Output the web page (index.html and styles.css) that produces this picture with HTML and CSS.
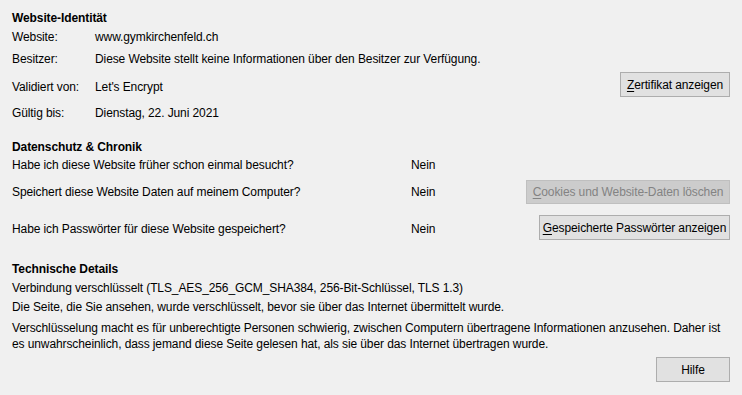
FILE: index.html
```
<html lang="de">
<head>
    <meta charset="UTF-8" />
    <title>Seiteninformationen</title>
    <link rel="stylesheet" href="styles.css">
</head>
<body>
    <div class="section identity">
      <h2>Website-Identität</h2>
      <div class="row">
        <span class="label">Website:</span>
        <span class="value">www.gymkirchenfeld.ch</span>
      </div>
      <div class="row owner">
        <span class="label">Besitzer:</span>
        <span class="value">Diese Website stellt keine Informationen über den Besitzer zur Verfügung.</span>
      </div>
      <div class="row verifier">
        <span class="label">Validiert von:</span>
        <span class="value">Let's Encrypt</span>
        <button class="btn btn-cert"><u>Z</u>ertifikat anzeigen</button>
      </div>
      <div class="row expiry">
        <span class="label">Gültig bis:</span>
        <span class="value">Dienstag, 22. Juni 2021</span>
      </div>
    </div>

    <div class="section privacy">
      <h2>Datenschutz &amp; Chronik</h2>
      <div class="qrow">
        <span class="question">Habe ich diese Website früher schon einmal besucht?</span>
        <span class="answer">Nein</span>
      </div>
      <div class="qrow q-cookies">
        <span class="question">Speichert diese Website Daten auf meinem Computer?</span>
        <span class="answer">Nein</span>
        <button class="btn btn-cookies" disabled><u>C</u>ookies und Website-Daten löschen</button>
      </div>
      <div class="qrow q-passwords">
        <span class="question">Habe ich Passwörter für diese Website gespeichert?</span>
        <span class="answer">Nein</span>
        <button class="btn btn-passwords"><u>G</u>espeicherte Passwörter anzeigen</button>
      </div>
    </div>

    <div class="section tech">
      <h2>Technische Details</h2>
      <p class="line1">Verbindung verschlüsselt (TLS_AES_256_GCM_SHA384, 256-Bit-Schlüssel, TLS 1.3)</p>
      <p class="line2">Die Seite, die Sie ansehen, wurde verschlüsselt, bevor sie über das Internet übermittelt wurde.</p>
      <p class="line3">Verschlüsselung macht es für unberechtigte Personen schwierig, zwischen Computern übertragene Informationen anzusehen. Daher ist es unwahrscheinlich, dass jemand diese Seite gelesen hat, als sie über das Internet übertragen wurde.</p>
    </div>

    <div class="footer">
      <button class="btn btn-help">Hilfe</button>
    </div>
</body>
</html>
```
FILE: styles.css
```
body {
    margin: 0;
    padding: 10px 12px 0 12px;
    background-color: #f0f0f0;
    color: #000;
    font-family: "Liberation Sans", Arial, sans-serif;
    font-size: 12px;
    line-height: 16px;
    letter-spacing: -0.1px;
}

h2 {
    margin: 0;
    font-size: 12px;
    font-weight: bold;
}

p {
    margin: 0;
}

.row {
    display: flex;
    align-items: flex-start;
}

.label {
    width: 83px;
    flex-shrink: 0;
}

.identity .row {
    margin-top: 3px;
}

.identity .owner {
    margin-top: 6px;
}

.identity .verifier {
    margin-top: 5px;
    height: 25px;
}

.verifier .label,
.verifier .value {
    padding-top: 7px;
}

.identity .expiry {
    margin-top: 8px;
}

.btn {
    font-family: inherit;
    font-size: 12px;
    line-height: 16px;
    letter-spacing: -0.1px;
    white-space: nowrap;
    color: #000;
    background-color: #e1e1e1;
    border: 1px solid #adadad;
    border-radius: 0;
    height: 25px;
    padding: 0;
    margin: 0;
}

.btn u {
    text-underline-offset: 2px;
}

.btn-cert {
    margin-left: auto;
    width: 110px;
}

.privacy {
    margin-top: 18px;
}

.qrow {
    display: flex;
    align-items: center;
    margin-top: 2px;
}

.question {
    width: 399px;
    flex-shrink: 0;
}

.q-cookies {
    margin-top: 7px;
}

.q-passwords {
    margin-top: 11px;
}

.q-passwords .question,
.q-passwords .answer {
    padding-top: 3px;
}

.btn-cookies {
    margin-left: auto;
    width: 204px;
    height: 24px;
    background-color: #cccccc;
    border-color: #bfbfbf;
    color: #838383;
}

.btn-passwords {
    margin-left: auto;
    width: 191px;
}

.tech {
    margin-top: 21px;
}

.tech .line1 {
    margin-top: 3px;
}

.tech .line2 {
    margin-top: 3px;
}

.tech .line3 {
    margin-top: 5px;
}

.footer {
    display: flex;
    justify-content: flex-end;
    margin-top: 5px;
}

.btn-help {
    width: 74px;
}
```
